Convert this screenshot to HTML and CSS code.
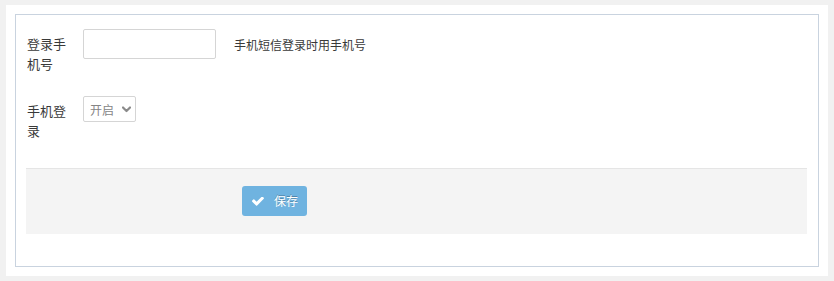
FILE: index.html
```html
<!DOCTYPE html>
<html lang="zh-CN">
<head>
<meta charset="utf-8">
<title>手机登录设置</title>
<link rel="stylesheet" href="styles.css">
</head>
<body>
<div class="panel">
  <form class="box">
    <div class="form-row">
      <label class="label" for="mobile">登录手机号</label>
      <input class="text-input" id="mobile" type="text">
      <span class="help">手机短信登录时用手机号</span>
    </div>
    <div class="form-row form-row-second">
      <label class="label" for="login">手机登录</label>
      <div class="select-wrap">
        <select class="select" id="login">
          <option>开启</option>
          <option>关闭</option>
        </select>
        <svg class="chevron" width="9" height="7" viewBox="0 0 9 7" aria-hidden="true">
          <path d="M1 1.5 L4.5 5 L8 1.5" fill="none" stroke="#8a8a8a" stroke-width="2.2" stroke-linecap="round" stroke-linejoin="round"/>
        </svg>
      </div>
    </div>
    <div class="actions">
      <button class="btn" type="button">
        <svg class="btn-icon" width="12" height="9" viewBox="120 420 1552 1110" aria-hidden="true">
          <path fill="#fff" d="M1671 566q0 40-28 68l-724 724-136 136q-28 28-68 28t-68-28l-136-136-362-362q-28-28-28-68t28-68l136-136q28-28 68-28t68 28l294 295 656-657q28-28 68-28t68 28l136 136q28 28 28 68z"/>
        </svg>
        <span>保存</span>
      </button>
    </div>
  </form>
</div>
</body>
</html>
```
FILE: styles.css
```css
* {
  box-sizing: border-box;
}

html, body {
  margin: 0;
}

body {
  background: #f1f1f1;
  padding: 5px 6px;
  height: 281px;
  font-family: "Open Sans", "Noto Sans CJK SC", sans-serif;
  color: #393939;
  font-size: 13px;
}

.panel {
  background: #fff;
  padding: 9px;
}

.box {
  margin: 0;
  border: 1px solid #c9d3df;
  padding: 14px 11px 32px 10px;
}

.form-row {
  display: flex;
  align-items: flex-start;
}

.form-row-second {
  margin-top: 22px;
}

.label {
  width: 44px;
  margin-left: 1px;
  margin-right: 12px;
  padding-top: 6px;
  font-size: 13px;
  line-height: 19.5px;
  color: #393939;
}

.text-input {
  width: 133px;
  height: 30px;
  margin: 0;
  border: 1px solid #d5d5d5;
  border-radius: 2px;
  background: #fff;
  padding: 4px 6px;
  font: inherit;
  outline: none;
}

.help {
  margin-left: 18px;
  padding-top: 2px;
  line-height: 30px;
  font-size: 12px;
  color: #393939;
}

.select-wrap {
  position: relative;
  width: 53px;
  height: 26px;
}

.select {
  appearance: none;
  -webkit-appearance: none;
  width: 53px;
  height: 26px;
  margin: 0;
  border: 1px solid #d5d5d5;
  border-radius: 2px;
  background: #fff;
  padding: 2px 0 0 6px;
  font-family: inherit;
  font-size: 12px;
  color: #858585;
  outline: none;
}

.chevron {
  position: absolute;
  right: 5px;
  top: 10px;
  pointer-events: none;
}

.actions {
  margin-top: 27px;
  border-top: 1px solid #e5e5e5;
  background: #f4f4f4;
  padding: 17px 0 18px 216px;
}

.btn {
  display: inline-flex;
  align-items: center;
  height: 30px;
  margin: 0;
  border: 0;
  border-radius: 3px;
  background: #6fb3e0;
  color: #fff;
  padding: 0 9px 0 10px;
  font-family: inherit;
  font-size: 12px;
  text-shadow: 0 -1px 0 rgba(0, 0, 0, 0.25);
  cursor: pointer;
}

.btn-icon {
  margin-right: 10px;
}
```
